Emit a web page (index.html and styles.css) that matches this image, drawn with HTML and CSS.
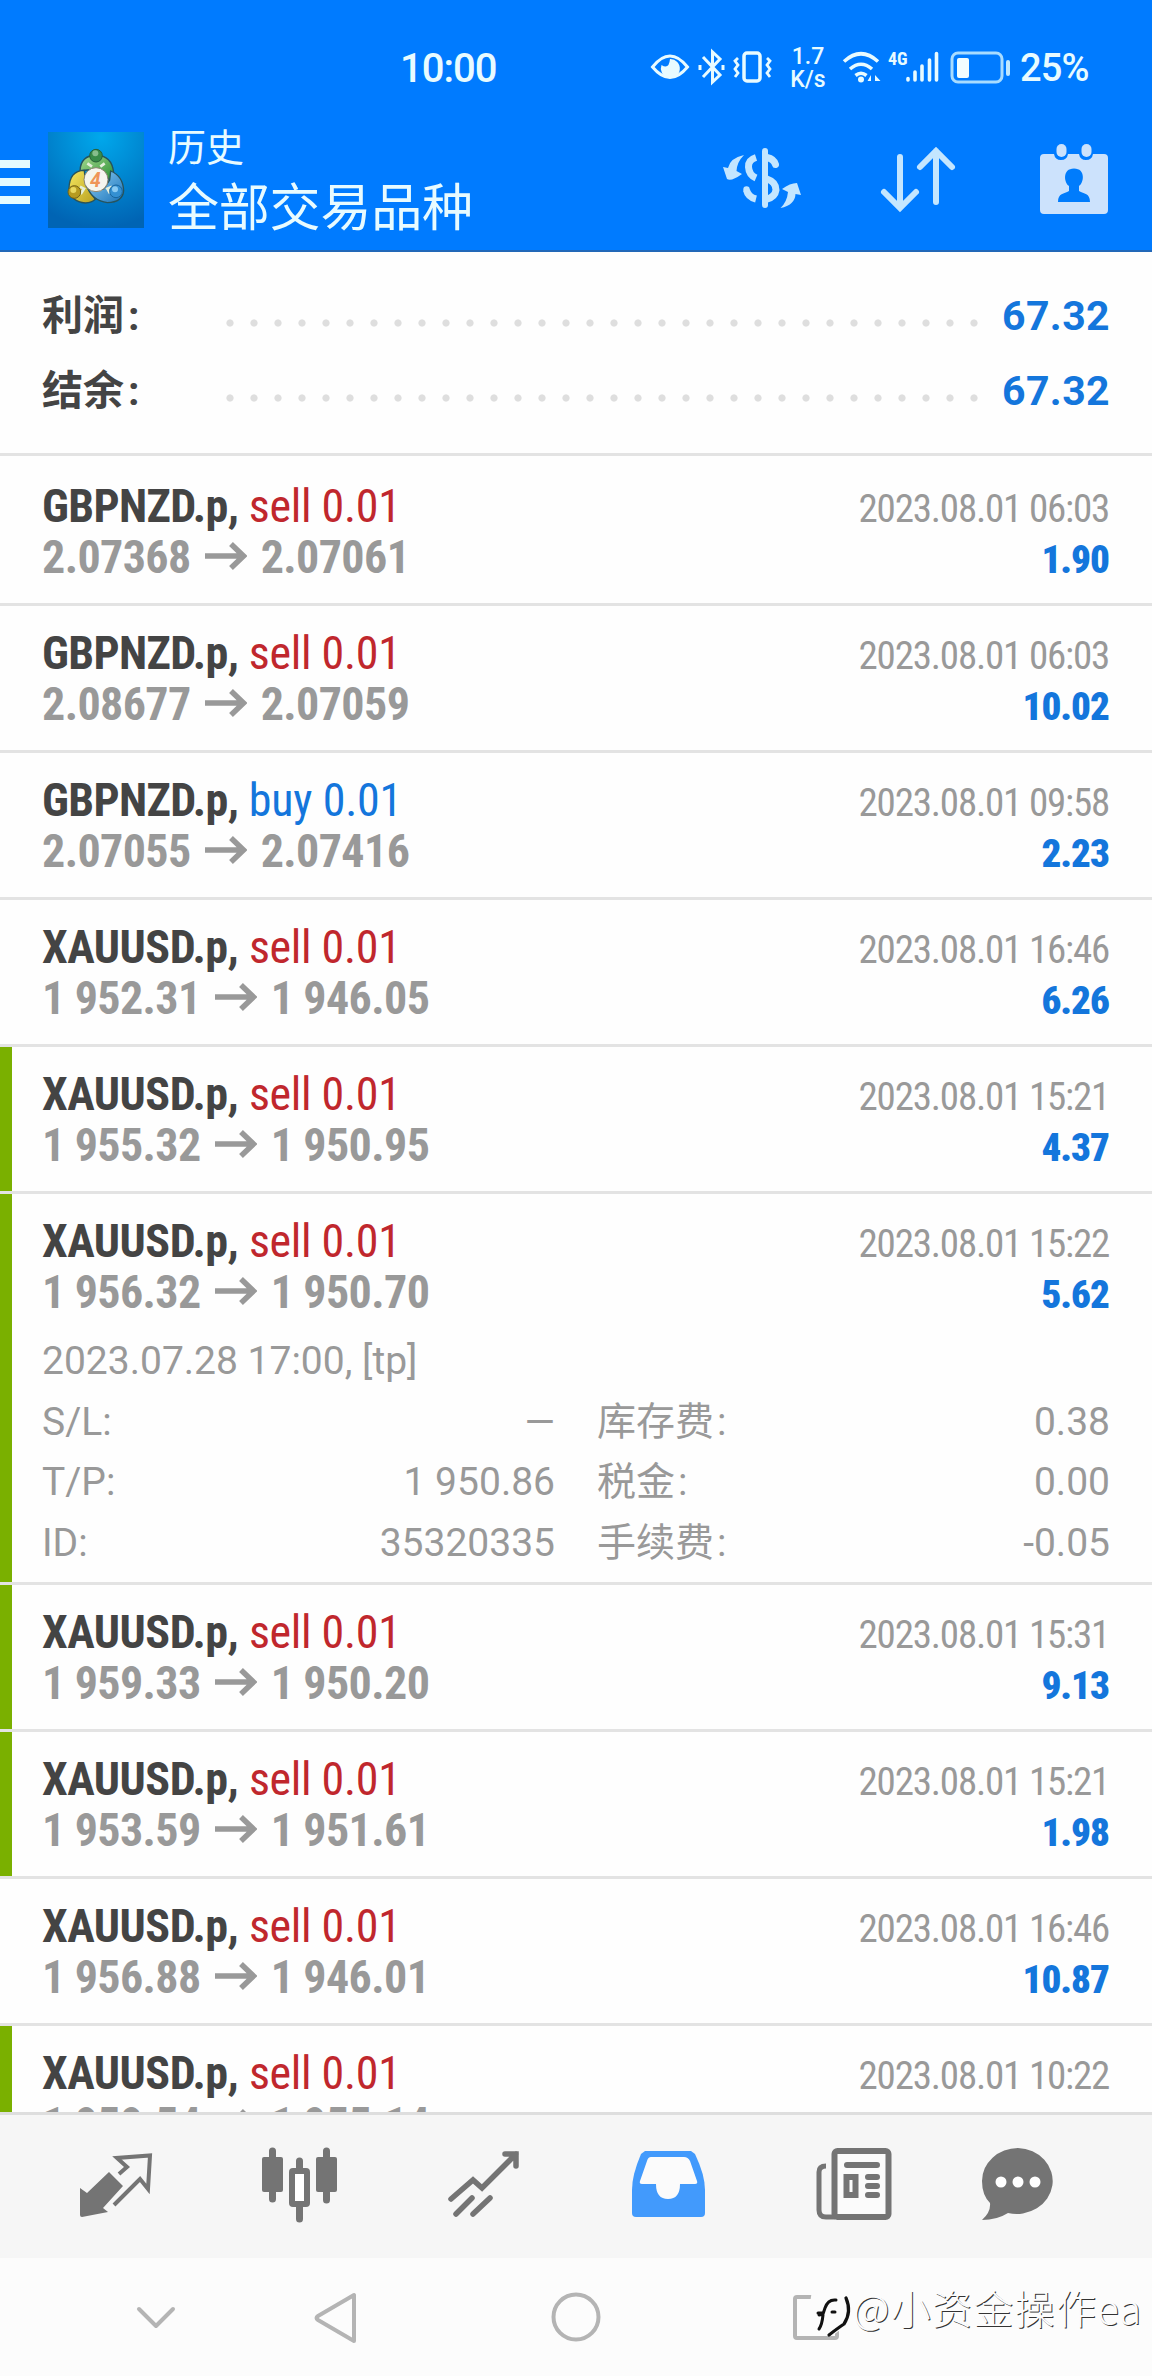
FILE: index.html
```html
<!DOCTYPE html>
<html lang="zh-CN">
<head>
<meta charset="utf-8">
<title>历史</title>
<link rel="stylesheet" href="styles.css">
</head>
<body>
<svg class="defs" width="0" height="0">
  <symbol id="arrow" viewBox="0 0 42 28"><path d="M0 14H39M26 2L38.500 14L26 26" fill="none" stroke="#999" stroke-width="5.500"/></symbol>
</svg>
<header class="top">
  <div class="status">
    <span class="clock">10:00</span>
    <svg class="st-left" width="126" height="40" viewBox="648 47 126 40" fill="none" stroke="#e8fbff" stroke-width="3">
      <path d="M652.500 67Q670 45 687.500 67Q670 88 652.500 67Z"/>
      <path d="M670 59A9.500 9.500 0 1 1 661.500 65Q669 70 670 59Z" fill="#e8fbff" stroke="none"/>
      <path d="M703 57L720 75L712.500 82V52L720 59L703 77M700 65V70M723 65V70"/>
      <rect x="744" y="53" width="16" height="28" rx="3" stroke-width="3.500"/>
      <path d="M738 58L735 61L738 65L735 69L738 73L735 77M767 58L770 61L767 65L770 69L767 73L770 77" stroke-width="2.800"/>
    </svg>
    <span class="speed"><span>1.7</span><span>K/s</span></span>
    <svg class="st-wifi" width="40" height="40" viewBox="842 47 40 40" fill="none" stroke="#e8fbff" stroke-width="3.600">
      <path d="M844 61.500Q861 46 878 61.500M850 69Q861 59.500 872 69M855.500 75.500Q861 71 866.500 75.500"/>
      <circle cx="861" cy="79.500" r="3" fill="#e8fbff" stroke="none"/>
      <path d="M871 75V81H867.500ZM875 75V81H880.500Z" fill="#e8fbff" stroke="none"/>
    </svg>
    <span class="net">4G</span>
    <svg class="st-signal" width="34" height="40" viewBox="905 47 34 40" fill="none" stroke="#e8fbff" stroke-width="3.600" stroke-linecap="round">
      <path d="M908 78.500V80M915 72V80M922 66V80M929.500 60V80M936.500 53.500V80"/>
    </svg>
    <svg class="st-batt" width="62" height="40" viewBox="950 47 62 40">
      <rect x="952" y="53" width="50" height="29" rx="6" fill="none" stroke="#a8dcff" stroke-width="3"/>
      <rect x="957" y="58" width="12" height="20" rx="2" fill="#f2fdff"/>
      <rect x="1006" y="60" width="4" height="16" rx="2" fill="#c0e8ff"/>
    </svg>
    <span class="pct">25%</span>
  </div>
  <div class="appbar">
    <div class="burger"><i></i><i></i><i></i></div>
    <svg class="logo" width="96" height="96" viewBox="144 36 288 288">
      <defs>
        <radialGradient id="sky" cx=".55" cy=".05" r=".95"><stop offset="0" stop-color="#00a8ec"/><stop offset=".5" stop-color="#0086d0"/><stop offset="1" stop-color="#0064b4"/></radialGradient>
        <linearGradient id="gr" x2="1" y2="1"><stop offset="0" stop-color="#a8dc94"/><stop offset="1" stop-color="#238a2c"/></linearGradient>
        <linearGradient id="ye" x2="1" y2="1"><stop offset="0" stop-color="#f6e860"/><stop offset="1" stop-color="#b8a020"/></linearGradient>
        <linearGradient id="bl" x2="1" y2="1"><stop offset="0" stop-color="#8ed0f6"/><stop offset="1" stop-color="#1a72b8"/></linearGradient>
      </defs>
      <rect x="144" y="36" width="288" height="288" fill="url(#sky)"/>
      <g stroke="#27535c" stroke-width="4">
        <path d="M240 152Q242 107 288 105Q336 107 341 158Q341 176 333 188L305 150H262Z" fill="url(#gr)"/>
        <path d="M253 151Q208 152 207 206Q212 246 256 249Q276 248 286 238L257 196Z" fill="url(#ye)"/>
        <path d="M332 153Q369 168 371 212Q368 247 322 248Q277 242 262 202L311 207L329 180Z" fill="url(#bl)"/>
      </g>
      <path d="M262 130L276 140M314 130L301 140M240 200L252 206L242 222M336 200L322 206L330 220" stroke="#e4efdc" stroke-width="8" fill="none"/>
      <circle cx="288" cy="107" r="19" fill="#388b48" stroke="#276038" stroke-width="3"/><circle cx="286" cy="100" r="9" fill="#86bd8c"/>
      <circle cx="223" cy="216" r="19" fill="#b69b20" stroke="#706018" stroke-width="3"/><circle cx="220" cy="210" r="9" fill="#e8d860"/>
      <circle cx="348" cy="214" r="19" fill="#3490d2" stroke="#17649e" stroke-width="3"/><circle cx="345" cy="208" r="9" fill="#8acaf2"/>
      <circle cx="288" cy="179" r="36" fill="#f5f5ee" stroke="#8b8470" stroke-width="3"/>
      <text class="four" x="286" y="200" text-anchor="middle">4</text>
    </svg>
    <div class="titles"><div class="t1">历史</div><div class="t2">全部交易品种</div></div>
    <svg class="act" width="400" height="100" viewBox="715 130 400 100" fill="none" stroke="#c4e6ff" stroke-width="6" stroke-linecap="round">
      <path d="M765 151V205"/>
      <path d="M756 157.500Q748 160 748.500 167Q749 175 756 178M756 199Q748 197 746.500 190" stroke-linecap="butt" stroke-width="7"/><circle cx="746.500" cy="189.500" r="3.200" fill="#c4e6ff" stroke="none"/>
      <path d="M767 157.500Q774 159 775.500 164.500M767 179Q776 182 776 190Q775 197 767 199" stroke-width="7"/>
      <path d="M744 155Q730 158 728 168L723 167L727 179Q731 182 742 174L736.500 171Q737 162 744 155Z" fill="#c4e6ff" stroke="none"/>
      <path d="M780.500 208Q787 202 788 192L782 189Q790 183 797 183L801 195L795.500 194Q795 205 780.500 208Z" fill="#c4e6ff" stroke="none"/>
      <path d="M900 157V207M884 192L900 208L916 192M936 202V151M920 167L936 151L952 167"/>
      <g stroke="none">
        <path d="M1044 154H1054Q1055 160 1061 160Q1067 160 1068 154H1079Q1080 160 1086 160Q1092 160 1093 154H1104Q1108 154 1108 158V210Q1108 214 1104 214H1044Q1040 214 1040 210V158Q1040 154 1044 154Z" fill="#cce2fc"/>
        <rect x="1056.500" y="144" width="10" height="13" rx="5" fill="#cce2fc"/><rect x="1081.500" y="144" width="10" height="13" rx="5" fill="#cce2fc"/>
        <path d="M1074 168.500C1062 168.500 1064 183 1069 186V191C1064 194 1058 193 1058 202H1090C1090 193 1084 194 1079 191V186C1084 183 1086 168.500 1074 168.500Z" fill="#007cfc"/>
      </g>
    </svg>
  </div>
</header>
<section class="summary">
  <div class="sum"><b class="lbl">利润<i>:</i></b><span class="dots"></span><b class="amt">67.32</b></div>
  <div class="sum"><b class="lbl">结余<i>:</i></b><span class="dots"></span><b class="amt">67.32</b></div>
</section>
<main class="list">
  <article class="deal"><div class="ln"><div><b class="sym">GBPNZD.p,</b> <span class="sell">sell 0.01</span></div><time>2023.08.01 06:03</time></div><div class="ln price"><div>2.07368<svg class="arr"><use href="#arrow"/></svg>2.07061</div><b class="profit">1.90</b></div></article>
  <article class="deal"><div class="ln"><div><b class="sym">GBPNZD.p,</b> <span class="sell">sell 0.01</span></div><time>2023.08.01 06:03</time></div><div class="ln price"><div>2.08677<svg class="arr"><use href="#arrow"/></svg>2.07059</div><b class="profit">10.02</b></div></article>
  <article class="deal"><div class="ln"><div><b class="sym">GBPNZD.p,</b> <span class="buy">buy 0.01</span></div><time>2023.08.01 09:58</time></div><div class="ln price"><div>2.07055<svg class="arr"><use href="#arrow"/></svg>2.07416</div><b class="profit">2.23</b></div></article>
  <article class="deal"><div class="ln"><div><b class="sym xau">XAUUSD.p,</b> <span class="sell">sell 0.01</span></div><time>2023.08.01 16:46</time></div><div class="ln price"><div>1 952.31<svg class="arr"><use href="#arrow"/></svg>1 946.05</div><b class="profit">6.26</b></div></article>
  <article class="deal tp"><div class="ln"><div><b class="sym xau">XAUUSD.p,</b> <span class="sell">sell 0.01</span></div><time>2023.08.01 15:21</time></div><div class="ln price"><div>1 955.32<svg class="arr"><use href="#arrow"/></svg>1 950.95</div><b class="profit">4.37</b></div></article>
  <article class="deal tp open"><div class="ln"><div><b class="sym xau">XAUUSD.p,</b> <span class="sell">sell 0.01</span></div><time>2023.08.01 15:22</time></div><div class="ln price"><div>1 956.32<svg class="arr"><use href="#arrow"/></svg>1 950.70</div><b class="profit">5.62</b></div>
    <div class="more">
      <div class="opened">2023.07.28 17:00, [tp]</div>
      <div class="kv"><span>S/L:</span><span class="dash">—</span></div><div class="kv zh"><span>库存费<i>:</i></span><span>0.38</span></div>
      <div class="kv"><span>T/P:</span><span>1 950.86</span></div><div class="kv zh"><span>税金<i>:</i></span><span>0.00</span></div>
      <div class="kv"><span>ID:</span><span>35320335</span></div><div class="kv zh"><span>手续费<i>:</i></span><span>-0.05</span></div>
    </div>
  </article>
  <article class="deal tp"><div class="ln"><div><b class="sym xau">XAUUSD.p,</b> <span class="sell">sell 0.01</span></div><time>2023.08.01 15:31</time></div><div class="ln price"><div>1 959.33<svg class="arr"><use href="#arrow"/></svg>1 950.20</div><b class="profit">9.13</b></div></article>
  <article class="deal tp"><div class="ln"><div><b class="sym xau">XAUUSD.p,</b> <span class="sell">sell 0.01</span></div><time>2023.08.01 15:21</time></div><div class="ln price"><div>1 953.59<svg class="arr"><use href="#arrow"/></svg>1 951.61</div><b class="profit">1.98</b></div></article>
  <article class="deal"><div class="ln"><div><b class="sym xau">XAUUSD.p,</b> <span class="sell">sell 0.01</span></div><time>2023.08.01 16:46</time></div><div class="ln price"><div>1 956.88<svg class="arr"><use href="#arrow"/></svg>1 946.01</div><b class="profit">10.87</b></div></article>
  <article class="deal tp"><div class="ln"><div><b class="sym xau">XAUUSD.p,</b> <span class="sell">sell 0.01</span></div><time>2023.08.01 10:22</time></div><div class="ln price"><div>1 959.54<svg class="arr"><use href="#arrow"/></svg>1 955.14</div></div></article>
</main>
<nav class="tabs">
  <svg viewBox="24 2116 184 142"><path d="M109 2172L123 2186L103 2208L108 2212L82 2217Q80 2217 80 2215V2188L87 2193Z" fill="#747474"/><path d="M119 2174L127 2167L117 2158L150 2155.500L148 2189L140 2179L114 2205" fill="none" stroke="#747474" stroke-width="4"/></svg>
  <svg viewBox="208 2116 184 142" fill="#747474"><rect x="262" y="2157" width="21" height="35" rx="2"/><rect x="316" y="2157" width="21" height="35" rx="2"/><path d="M272.500 2151V2199M326.500 2151V2200M299.500 2161V2169M299.500 2205V2219" stroke="#747474" stroke-width="7" stroke-linecap="round"/><rect x="292" y="2171" width="15" height="33" rx="1" fill="#fff" stroke="#747474" stroke-width="6"/></svg>
  <svg viewBox="392 2116 184 142" fill="none" stroke="#747474" stroke-width="5.500" stroke-linecap="round" stroke-linejoin="round"><path d="M451 2199L473 2180L482 2188L516 2154M505 2154H516V2166" stroke-linejoin="miter"/><path d="M456 2214L472 2198M473 2214L490 2198"/></svg>
  <svg viewBox="576 2116 184 142"><path d="M645 2151H691L695 2154Q705 2175 705 2190V2213Q705 2217 701 2217H636Q632 2217 632 2213V2190Q632 2175 641 2154Z" fill="#429afc"/><path d="M651 2157H684Q688 2157 690 2161L697 2181Q698 2184 695 2184H680Q680 2199 668 2199Q656 2199 656 2184H642Q639 2184 640 2181L647 2161Q648 2157 651 2157Z" fill="#fbfbfb"/></svg>
  <svg viewBox="760 2116 184 142" fill="none" stroke="#747474" stroke-width="6"><path d="M826 2166Q819 2166 819 2172V2210Q819 2217 826 2217H835" stroke-width="5"/><rect x="834.500" y="2151" width="54" height="66" rx="3" fill="#fbfbfb"/><path d="M847 2165H877M868 2177H877M868 2186H877M868 2195H877" stroke-linecap="round"/><rect x="846.500" y="2177" width="9" height="18"/></svg>
  <svg viewBox="944 2116 184 142"><path d="M1018 2148A36 33 0 1 1 1008 2213Q997 2220 982 2220Q991 2212 990 2203Q982 2195 982 2181A36 33 0 0 1 1018 2148Z" fill="#747474"/><circle cx="1001" cy="2182" r="5.500" fill="#fff"/><circle cx="1018" cy="2182" r="5.500" fill="#fff"/><circle cx="1035" cy="2182" r="5.500" fill="#fff"/></svg>
</nav>
<footer class="sysnav">
  <svg viewBox="0 2258 1152 118" fill="none" stroke="#b4b4b4" stroke-width="4" stroke-linecap="round" stroke-linejoin="round">
    <path d="M139 2309L156 2326L173 2309"/><path d="M354 2295V2341L318 2320Q315 2318 318 2316Z"/><circle cx="576" cy="2317" r="22.500"/><rect x="795" y="2297" width="42" height="41" rx="2"/>
    <path d="M812 2290H840L848 2300V2324L832 2336L806 2330Z" fill="#fcfcfc" stroke="none"/>
    <path d="M836 2300Q828 2299 825 2308L823 2314L819 2315M818 2313H822M832 2312H835M823 2315Q822 2325 819 2329" stroke="#111" stroke-width="3"/>
    <path d="M846 2298Q852 2312 844 2324Q838 2328 829 2335" stroke="#111" stroke-width="3.200"/>
  </svg>
  <div class="mark">@小资金操作ea</div>
</footer>
</body>
</html>
```
FILE: styles.css
```css
*{box-sizing:border-box}
body{margin:0;width:1152px;height:2376px;overflow:hidden;background:#fefefe;font-family:Roboto,"Noto Sans CJK SC",sans-serif;display:flex;flex-direction:column}
i{font-style:normal}
.defs{display:block;flex:none;height:0}
.top{height:252px;flex:none;background:#007bff;border-bottom:2px solid #2268b8;color:#e8fbff}
.status{height:120px;display:flex;align-items:flex-start;padding-left:400px}
.status svg{margin-top:47px;flex:none}
.clock{font-size:40px;font-weight:500;line-height:48px;margin-top:45px;width:248px;letter-spacing:-1px}
.speed{width:36px;margin:45px 0 0 16px;font-size:23px;line-height:23px;font-weight:500;display:flex;flex-direction:column;align-items:center;white-space:nowrap}
.st-wifi{margin-left:16px}
.net{font:700 18px/20px "Roboto Condensed",sans-serif;margin:49px 0 0 6px;width:17px}
.st-batt{margin-left:11px}
.pct{font-size:38px;font-weight:500;line-height:48px;margin:44px 0 0 8px;letter-spacing:-.8px}
.appbar{height:130px;display:flex;align-items:flex-start}
.burger{width:30px;margin-top:40px;display:flex;flex-direction:column;gap:10px}
.burger i{height:8px;background:#e4fbff}
.logo{margin:12px 0 0 18px}
.four{font:italic 700 58px "Roboto",sans-serif;fill:#ef9558}
.titles{margin-left:24px;width:547px}
.t1{font-size:38px;line-height:50px;margin-top:3px}
.t2{font-size:51px;line-height:66px;margin-top:3px;letter-spacing:-.2px}
.act{margin-top:10px}
.summary{height:204px;flex:none;padding:27px 42px 0;border-bottom:3px solid #e3e3e3}
.sum{height:75px;display:flex;line-height:75px;font-size:41px}
.lbl{width:176px;color:#444;font-weight:700}
.lbl i{margin-left:4px}
.dots{width:768px;height:8px;margin-top:40px;background:radial-gradient(circle at 12px 4px,#dedede 3.2px,transparent 4px) 0 0/24px 8px repeat-x}
.amt{flex:1;display:flex;justify-content:flex-end;color:#1476dc;font-weight:700;letter-spacing:.4px}
.list{height:1656px;flex:none;padding-top:3px;overflow:hidden}
.deal{height:147px;padding:22px 42px 0;border-bottom:3px solid #e3e3e3;font-family:"Roboto Condensed",sans-serif}
.deal.tp{background:linear-gradient(#7ab000,#7ab000) 0 0/12px 100% no-repeat}
.deal.open{height:391px}
.ln{display:flex;justify-content:space-between;align-items:baseline;font-size:46px;line-height:51px;height:51px;white-space:pre}
.sym{color:#444;letter-spacing:-.65px}
.sym.xau{letter-spacing:-.5px}
.sell{color:#c0272d;letter-spacing:-.3px}
.buy{color:#1476dc;letter-spacing:-.2px}
.ln time{font-size:39px;color:#999;letter-spacing:-1.2px;margin-right:1px}
.price{color:#999;font-weight:700;letter-spacing:-.6px}
.arr{width:42px;height:28px;margin:0 14px 0 14px;vertical-align:3px}
.profit{font-size:39px;color:#1476dc;letter-spacing:-1px;margin-right:1px}
.more{margin-top:13px;display:grid;grid-template-columns:513px 512px;column-gap:43px;grid-template-rows:repeat(4,60.700px);font:400 39px/61px Roboto,"Noto Sans CJK SC",sans-serif;color:#999}
.opened{grid-column:1/-1}
.kv{display:flex;justify-content:space-between}
.zh{margin-left:-1px}
.zh i{margin-left:3px}
.tabs{height:146px;flex:none;display:flex;padding-left:24px;background:#f6f6f6;border-top:3px solid #dedede}
.tabs svg{width:184px;height:142px;flex:none;margin-top:1px}
.sysnav{height:118px;position:relative;background:#fcfcfc}
.sysnav svg{display:block;width:1152px;height:118px}
.mark{position:absolute;left:853px;top:21px;font:300 40px/56px "Noto Sans CJK SC",sans-serif;letter-spacing:1.3px;color:#fcfcfc;text-shadow:1px 1px 0 #333;white-space:nowrap}
```
